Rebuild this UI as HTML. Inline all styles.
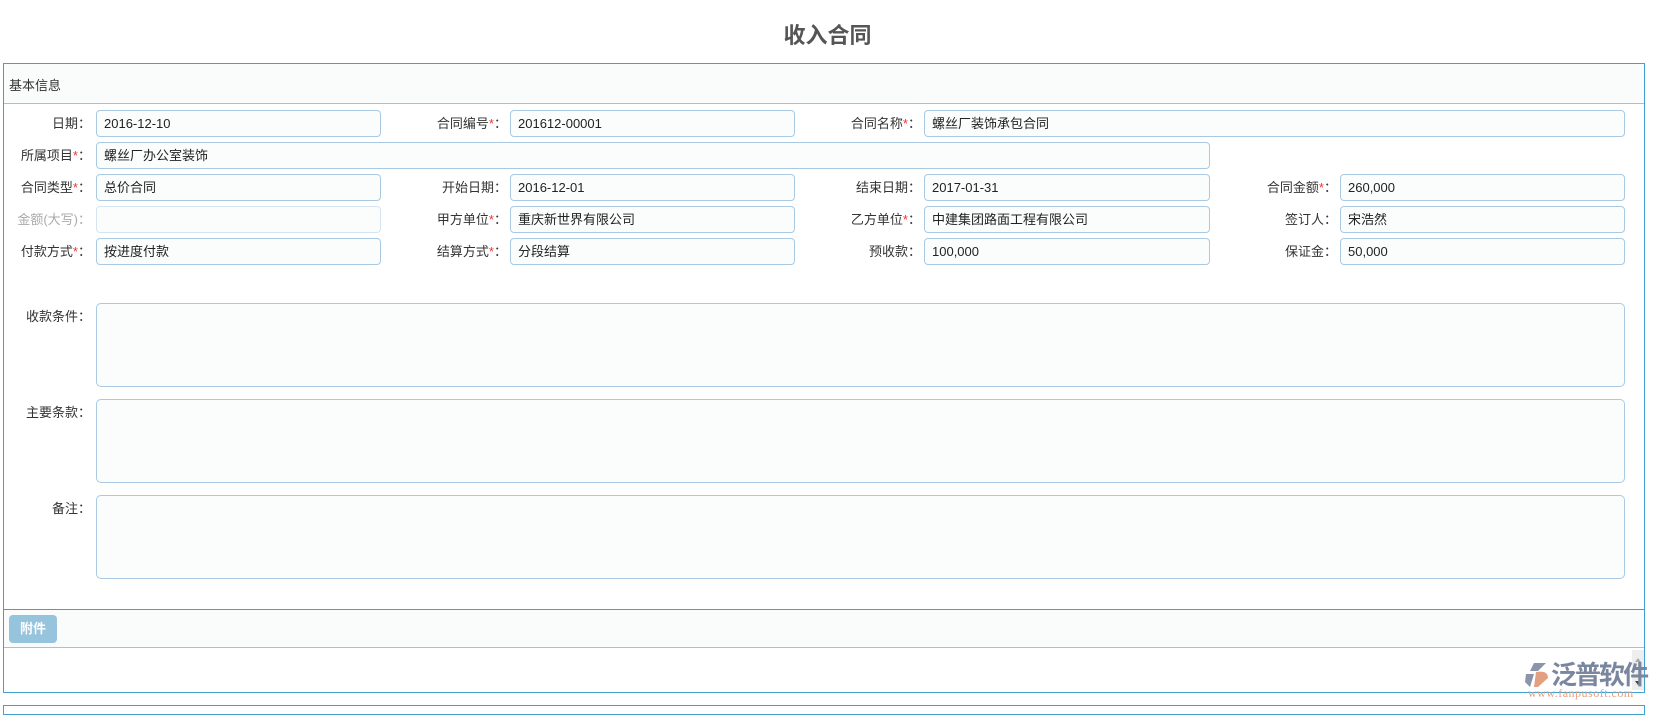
<!DOCTYPE html>
<html><head><meta charset="utf-8"><style>
*{box-sizing:border-box;margin:0;padding:0}
body{width:1655px;height:708px;background:#fff;font-family:"Liberation Sans","Noto Sans CJK SC",sans-serif;font-size:13px;color:#333;position:relative;overflow:hidden}
.a{position:absolute}
h1{position:absolute;left:0;width:1655px;top:18px;text-align:center;font-size:22px;font-weight:bold;color:#555}
.box{left:3px;top:63px;width:1642px;height:630px;border:1px solid #3ea1d2}
.hdr{left:4px;top:64px;width:1640px;height:40px;background:#fafcfc;border-bottom:1px solid #9cc4e0}
.lb{position:absolute;text-align:right;width:100px;line-height:27px;white-space:nowrap;margin-left:7px}
.lb i{color:#e33;font-style:normal}
.in{position:absolute;height:27px;border:1px solid #a9c9e2;border-radius:4px;background:#fbfdfd;line-height:25px;padding-left:7px;color:#222}
.ta{position:absolute;left:96px;width:1529px;height:84px;border:1px solid #a9c9e2;border-radius:5px;background:#fbfdfd}
</style></head><body>
<h1>收入合同</h1>
<div class="a box"></div>
<div class="a hdr"><span class="a" style="left:5px;top:11px">基本信息</span></div>

<div class="lb" style="left:-16px;top:110px">日期：</div><div class="in" style="left:96px;top:110px;width:285px">2016-12-10</div>
<div class="lb" style="left:400px;top:110px">合同编号<i>*</i>：</div><div class="in" style="left:510px;top:110px;width:285px">201612-00001</div>
<div class="lb" style="left:814px;top:110px">合同名称<i>*</i>：</div><div class="in" style="left:924px;top:110px;width:701px">螺丝厂装饰承包合同</div>

<div class="lb" style="left:-16px;top:142px">所属项目<i>*</i>：</div><div class="in" style="left:96px;top:142px;width:1114px">螺丝厂办公室装饰</div>

<div class="lb" style="left:-16px;top:174px">合同类型<i>*</i>：</div><div class="in" style="left:96px;top:174px;width:285px">总价合同</div>
<div class="lb" style="left:400px;top:174px">开始日期：</div><div class="in" style="left:510px;top:174px;width:285px">2016-12-01</div>
<div class="lb" style="left:814px;top:174px">结束日期：</div><div class="in" style="left:924px;top:174px;width:286px">2017-01-31</div>
<div class="lb" style="left:1230px;top:174px">合同金额<i>*</i>：</div><div class="in" style="left:1340px;top:174px;width:285px">260,000</div>

<div class="lb" style="left:-16px;top:206px;color:#aaa">金额(大写)：</div><div class="in" style="left:96px;top:206px;width:285px;border-color:#d6e4ef"></div>
<div class="lb" style="left:400px;top:206px">甲方单位<i>*</i>：</div><div class="in" style="left:510px;top:206px;width:285px">重庆新世界有限公司</div>
<div class="lb" style="left:814px;top:206px">乙方单位<i>*</i>：</div><div class="in" style="left:924px;top:206px;width:286px">中建集团路面工程有限公司</div>
<div class="lb" style="left:1230px;top:206px">签订人：</div><div class="in" style="left:1340px;top:206px;width:285px">宋浩然</div>

<div class="lb" style="left:-16px;top:238px">付款方式<i>*</i>：</div><div class="in" style="left:96px;top:238px;width:285px">按进度付款</div>
<div class="lb" style="left:400px;top:238px">结算方式<i>*</i>：</div><div class="in" style="left:510px;top:238px;width:285px">分段结算</div>
<div class="lb" style="left:814px;top:238px">预收款：</div><div class="in" style="left:924px;top:238px;width:286px">100,000</div>
<div class="lb" style="left:1230px;top:238px">保证金：</div><div class="in" style="left:1340px;top:238px;width:285px">50,000</div>

<div class="lb" style="left:-16px;top:303px">收款条件：</div><div class="ta" style="top:303px"></div>
<div class="lb" style="left:-16px;top:399px">主要条款：</div><div class="ta" style="top:399px"></div>
<div class="lb" style="left:-16px;top:495px">备注：</div><div class="ta" style="top:495px"></div>

<div class="a" style="left:4px;top:609px;width:1640px;height:39px;background:#fafcfc;border-top:1px solid #3ea1d2;border-bottom:1px solid #9cc4e0"></div>
<div class="a" style="left:9px;top:615px;width:48px;height:28px;background:#96c4dd;border-radius:4px;color:#fff;font-weight:bold;text-align:center;line-height:28px">附件</div>

<div class="a" style="left:3px;top:705px;width:1642px;height:10px;border:1px solid #3ea1d2"></div>
<div class="a" style="left:1632px;top:650px;width:12px;height:40px;background:#eee"></div>
<div class="a" style="left:1635px;top:655px;width:0;height:0;border:3px solid transparent;border-bottom:4px solid #aaa"></div>
<div class="a" style="left:1635px;top:681px;width:0;height:0;border:3px solid transparent;border-top:4px solid #444"></div>
<svg class="a" style="left:1524px;top:662px" width="28" height="26" viewBox="0 0 28 26"><path d="M10 1 L22 1 L14 9 L6 9 Z" fill="#8a94ab"/><path d="M2 12 L10 12 L6 25 L1 20 Z" fill="#8a94ab"/><path d="M12 10 Q24 8 24 16 L14 25 L10 25 Z" fill="#e3a080"/></svg>
<div class="a" style="left:1551px;top:660px;font-size:26px;color:#7a859e;font-weight:bold;line-height:30px;letter-spacing:-2px">泛普软件</div>
<div class="a" style="left:1528px;top:686px;font-family:'Liberation Serif',serif;font-size:12px;color:#e0a080;letter-spacing:0.5px">www.fanpusoft.com</div>
</body></html>
